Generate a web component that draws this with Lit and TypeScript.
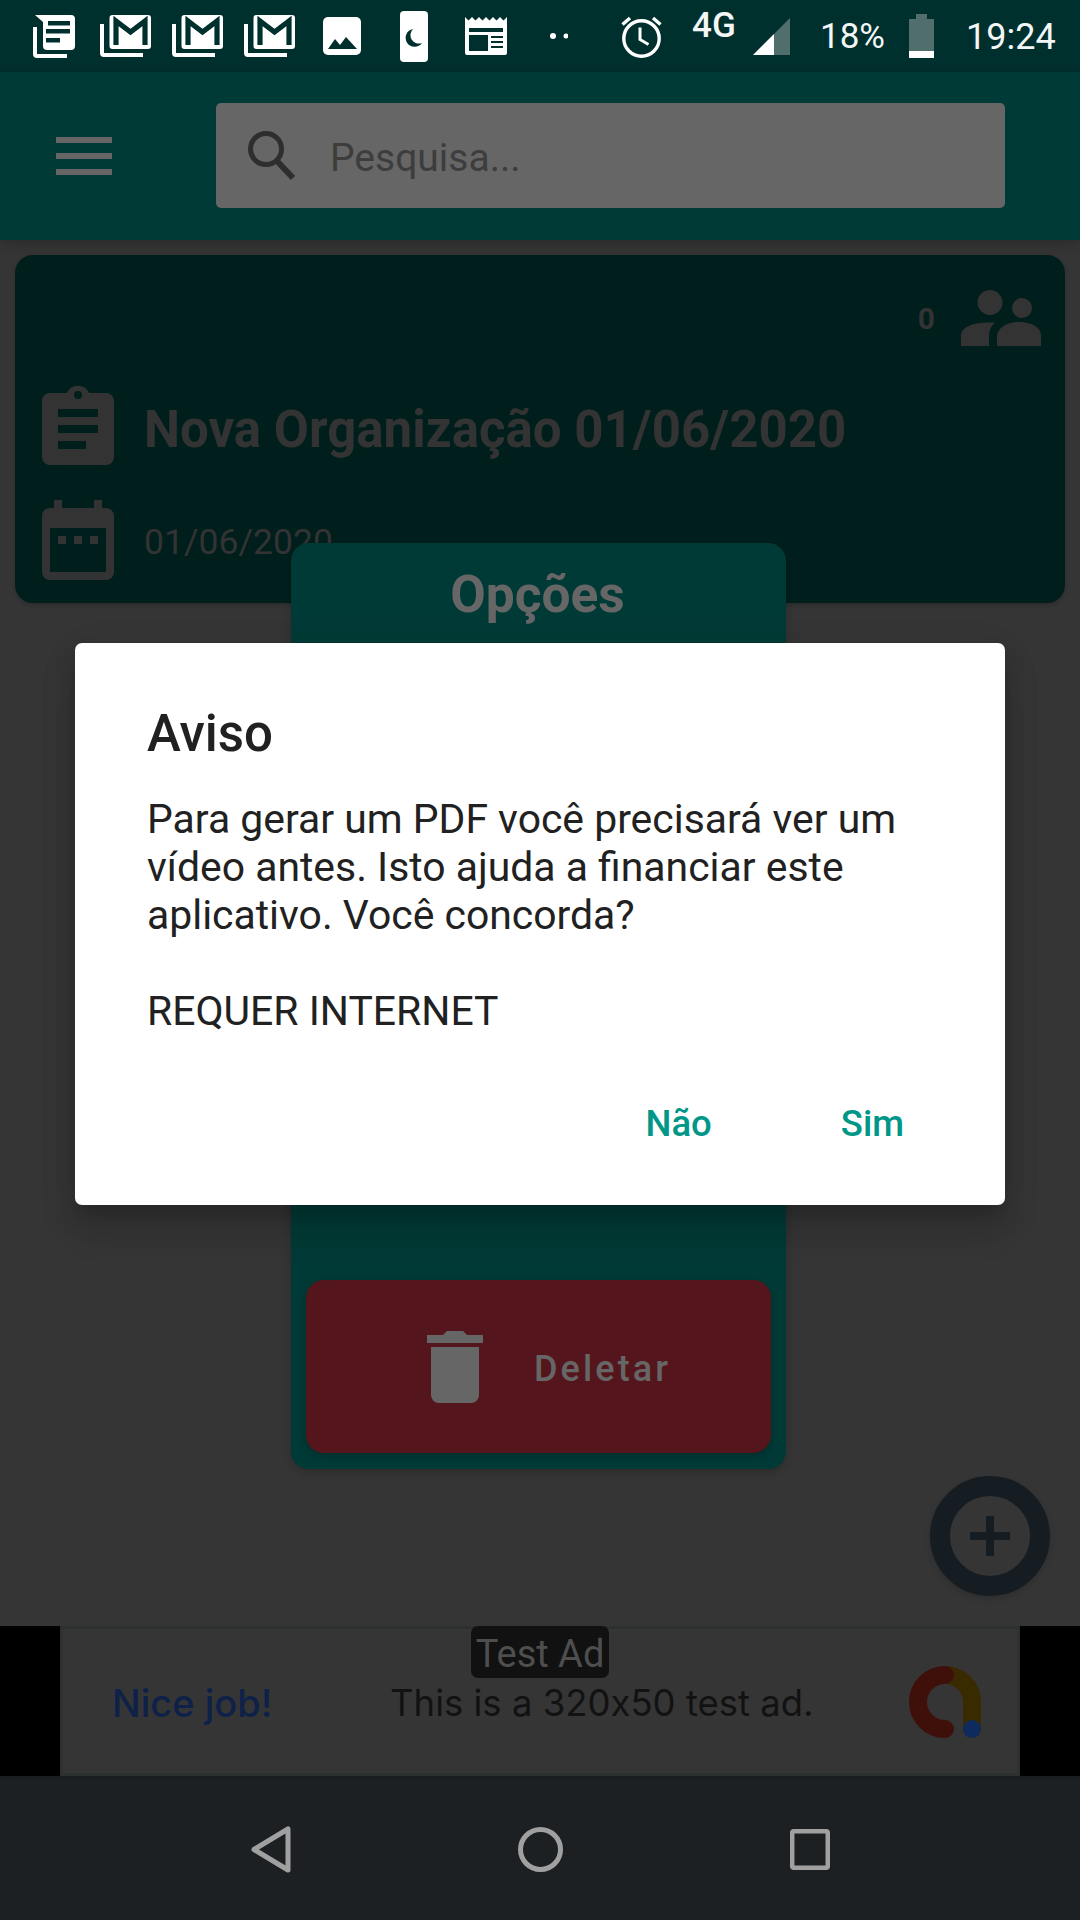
import { LitElement, html, css, svg } from "lit";
import { customElement } from "lit/decorators.js";

const mailIcon = html`<svg width="51" height="42" viewBox="0 0 51 42">
  <path d="M2 9v29a2 2 0 0 0 2 2h39" fill="none" stroke="#fff" stroke-width="4" />
  <rect x="9.5" y="0" width="41.5" height="34" rx="3" fill="#fff" />
  <path d="M16 30V6L30.5 17 45 6V30" fill="none" stroke="#00302e" stroke-width="5.2" />
</svg>`;

const hamburger = html`<svg width="56" height="38" viewBox="0 0 56 38">
  <path d="M0 0h56v6H0zM0 16h56v6H0zM0 32h56v6H0z" fill="#666" />
</svg>`;

const peopleIcon = svg`<circle cx="29" cy="12.5" r="12.5" /><circle cx="61" cy="18" r="10" />
  <path d="M0 56V46c0-9 12-13.500 28-13.500 2 0 4 .1 6 .3C29 37 28 42 28 47v9zM36 56v-8c0-11 11-16 22-16 12 0 22 5 22 13.500V56z" />`;

@customElement("app-root")
export class AppRoot extends LitElement {
  static styles = css`
    :host {
      display: block;
      position: relative;
      width: 1080px;
      height: 1920px;
      overflow: hidden;
      font-family: Roboto, "Liberation Sans", sans-serif;
      background: #353535;
    }
    svg {
      display: block;
      flex: none;
    }
    .page {
      display: flex;
      flex-direction: column;
      height: 1920px;
    }

    /* status bar */
    .status {
      height: 72px;
      flex: none;
      background: #00302e;
      display: flex;
      align-items: center;
      padding-left: 33px;
      color: #f4f7f7;
    }
    .status span {
      flex: none;
      font-size: 36px;
      line-height: 72px;
      position: relative;
      top: 1px;
    }
    .m25 { margin-left: 25px; }
    .m21 { margin-left: 21px; }
    .m28 { margin-left: 28px; }
    .m39 { margin-left: 39px; }
    .m37 { margin-left: 37px; }
    .m43 { margin-left: 43px; }
    .m53 { margin-left: 53px; }
    .m30 { margin-left: 30px; }
    .m16 { margin-left: 16px; }
    .m24 { margin-left: 24px; }
    .m32 { margin-left: 32px; }
    .status .net {
      font-size: 35px;
      font-weight: 500;
      width: 45px;
      top: -10px;
    }
    .status .pct {
      font-size: 35px;
    }

    /* app bar */
    .appbar {
      height: 168px;
      flex: none;
      background: #003a36;
      display: flex;
      align-items: center;
      padding-left: 56px;
      position: relative;
      box-shadow: 0 3px 12px rgba(0, 0, 0, 0.22);
    }
    .search {
      margin-left: 104px;
      width: 789px;
      height: 105px;
      margin-top: -1px;
      background: #666;
      border-radius: 5px;
      display: flex;
      align-items: center;
      padding-left: 32px;
      box-sizing: border-box;
      font-size: 39px;
      color: #3d3d3d;
    }
    .search svg {
      margin-right: 34px;
    }
    .search span {
      position: relative;
      top: 2px;
    }

    /* main area */
    .main {
      height: 1386px;
      flex: none;
      box-sizing: border-box;
      position: relative;
      padding: 15px;
    }
    .card {
      height: 348px;
      box-sizing: border-box;
      background: #001f1c;
      border-radius: 18px;
      padding: 35px 24px 0 27px;
      color: #333;
      box-shadow: 0 2px 5px rgba(0, 0, 0, 0.18);
    }
    .count {
      display: flex;
      justify-content: flex-end;
      align-items: center;
      gap: 26px;
      height: 56px;
      font-size: 30px;
      font-weight: 700;
    }
    .row {
      display: flex;
      align-items: center;
      gap: 30px;
    }
    .row.title {
      margin-top: 39px;
      font-size: 51px;
      font-weight: 700;
    }
    .row.date {
      margin-top: 35px;
      font-size: 35.5px;
    }
    .row.title span { position: relative; top: 4px; }
    .row.date span { position: relative; top: 2px; }

    .panel {
      position: absolute;
      left: 291px;
      top: 303px;
      width: 495px;
      height: 926px;
      box-sizing: border-box;
      padding: 0 15px 16px;
      background: #003a36;
      border-radius: 18px;
      display: flex;
      flex-direction: column;
      box-shadow: 0 3px 8px rgba(0, 0, 0, 0.2);
    }
    .panel h2 {
      margin: 0;
      padding-right: 2px;
      text-align: center;
      font-size: 51.5px;
      font-weight: 700;
      color: #666;
      line-height: 104px;
    }
    .delete {
      margin-top: auto;
      height: 173px;
      background: #54161c;
      border-radius: 18px;
      display: flex;
      align-items: center;
      padding-left: 121px;
      gap: 51px;
      color: #666;
      font-size: 36px;
      font-weight: 500;
      letter-spacing: 3.1px;
      box-shadow: 0 3px 8px rgba(0, 0, 0, 0.2);
    }
    .delete span { position: relative; top: 2px; }

    .fab {
      position: absolute;
      right: 30px;
      bottom: 30px;
      width: 120px;
      height: 120px;
      box-shadow: 0 3px 6px rgba(0, 0, 0, 0.14);
      border-radius: 50%;
    }

    /* test ad */
    .ad {
      height: 150px;
      flex: none;
      background: #000;
      padding: 0 60px;
      position: relative;
    }
    .ad-body {
      height: 150px;
      box-sizing: border-box;
      background: #353535;
      border: 3px solid #2d3030;
      display: flex;
      align-items: center;
      padding: 0 27px 0 49px;
      font-family: Inter, Roboto, sans-serif;
      font-feature-settings: "calt" 0;
      font-size: 36.5px;
      color: #121212;
    }
    .ad-body span {
      position: relative;
      top: 2px;
    }
    .ad-nice {
      color: #0e2149;
      font-size: 38px;
      font-weight: 500;
      width: 278px;
      flex: none;
    }
    .ad-text { flex: 1; }
    .ad-label {
      position: absolute;
      left: 471px;
      top: 0;
      width: 138px;
      height: 52px;
      line-height: 56px;
      background: #111;
      border-radius: 7px;
      color: #4e4e4e;
      text-align: center;
      font-size: 38px;
    }

    /* nav bar */
    .nav {
      height: 144px;
      flex: none;
      background: #1c2022;
      border-top: 3px solid #191d20;
      display: flex;
      align-items: center;
      justify-content: space-between;
      padding: 0 250px 0 251px;
      box-sizing: border-box;
    }

    /* dialog */
    .dialog {
      position: absolute;
      left: 75px;
      top: 643px;
      width: 930px;
      height: 562px;
      box-sizing: border-box;
      padding: 0 74px 0 72px;
      background: #fff;
      border-radius: 7px;
      color: #212121;
      display: flex;
      flex-direction: column;
      box-shadow: 0 24px 38px rgba(0, 0, 0, 0.12), 0 9px 46px rgba(0, 0, 0, 0.06), 0 11px 15px rgba(0, 0, 0, 0.12);
    }
    .dialog h1 {
      margin: 0;
      font-size: 51px;
      font-weight: 500;
      line-height: 60px;
      padding-top: 61px;
    }
    .dialog p {
      margin: 0;
      font-size: 40.9px;
      line-height: 48px;
    }
    .dialog .msg { margin-top: 31px; }
    .dialog .req { margin-top: 48px; }
    .actions {
      margin-top: auto;
      display: flex;
      justify-content: flex-end;
      gap: 129px;
      padding-bottom: 60px;
      padding-right: 27px;
      color: #009688;
      font-size: 36.5px;
      font-weight: 500;
    }
  `;

  render() {
    return html`
      <div class="page">
        <div class="status">
          <svg width="42" height="44" viewBox="0 0 42 44">
            <path d="M2 13v27a2 2 0 0 0 2 2h30" fill="none" stroke="#fff" stroke-width="4" />
            <path d="M2 1h36a4 4 0 0 1 4 4v27a4 4 0 0 1-4 4H14a4 4 0 0 1-4-4V8z" fill="#fff" />
            <path d="M15 7h22v4.500H15zM13 15h24v4.500H13zM13 24h14v4.500H13z" fill="#00302e" />
          </svg>
          <span class="m25"></span>${mailIcon}
          <span class="m21"></span>${mailIcon}
          <span class="m21"></span>${mailIcon}
          <svg class="m28" width="38" height="38" viewBox="0 0 38 38">
            <rect width="38" height="38" rx="5" fill="#fff" />
            <path d="M5 32l7-10 5 6 6-8 11 12z" fill="#00302e" />
          </svg>
          <svg class="m39" width="28" height="51" viewBox="0 0 28 51">
            <rect width="28" height="51" rx="4" fill="#fff" />
            <path d="M13 18A9 9 0 1 0 22 32A8.500 8.500 0 0 1 13 18z" fill="#00302e" />
          </svg>
          <svg class="m37" width="42" height="38" viewBox="0 0 42 38">
            <path d="M0 0l3.500 3.500L7 0l3.500 3.500L14 0l3.500 3.500L21 0l3.500 3.500L28 0l3.500 3.500L35 0l3.500 3.500L42 0v36a2 2 0 0 1-2 2H2a2 2 0 0 1-2-2z" fill="#fff" />
            <path d="M4 11h34v4H4zM4 18h19v16H4zM26 19h12v2H26zM26 24h12v2H26zM26 29h12v2H26z" fill="#00302e" />
          </svg>
          <svg class="m43" width="18" height="6" viewBox="0 0 18 6">
            <circle cx="3" cy="3" r="3" fill="#fff" /><circle cx="16" cy="3" r="2.500" fill="#fff" />
          </svg>
          <svg class="m53" width="41" height="43" viewBox="0 0 41 43">
            <circle cx="20.500" cy="23.500" r="17.700" fill="none" stroke="#fff" stroke-width="3.400" />
            <path d="M1.500 9.500L9 3M39.500 9.500L32 3" stroke="#fff" stroke-width="3.400" fill="none" />
            <path d="M19 12.500v12l8.500 5" stroke="#fff" stroke-width="3" fill="none" />
          </svg>
          <span class="net m30">4G</span>
          <svg class="m16" width="37" height="37" viewBox="0 0 37 37">
            <path d="M0 37L37 0v37z" fill="#4f6e6c" />
            <path d="M0 37L21 16v21z" fill="#fff" />
          </svg>
          <span class="pct m30">18%</span>
          <svg class="m24" width="25" height="44" viewBox="0 0 25 44">
            <path d="M7 0h11v5h7v32H0V5h7z" fill="#4f6e6c" />
            <path d="M0 37h25v7H0z" fill="#fff" />
          </svg>
          <span class="m32">19:24</span>
        </div>

        <div class="appbar">
          ${hamburger}
          <div class="search">
            <svg width="48" height="50" viewBox="0 0 48 50">
              <circle cx="18" cy="18" r="15.500" fill="none" stroke="#2e2e2e" stroke-width="5" />
              <path d="M29 30l16 17" stroke="#2e2e2e" stroke-width="6" fill="none" />
            </svg>
            <span>Pesquisa...</span>
          </div>
        </div>

        <div class="main">
          <div class="card">
            <div class="count">
              0
              <svg width="80" height="56" viewBox="0 0 80 56" fill="#333">${peopleIcon}</svg>
            </div>
            <div class="row title">
              <svg width="72" height="80" viewBox="0 0 72 80" fill="#333">
                <path fill-rule="evenodd" d="M8 8h17a12 12 0 0 1 22 0h17a8 8 0 0 1 8 8v56a8 8 0 0 1-8 8H8a8 8 0 0 1-8-8V16a8 8 0 0 1 8-8zM36 6a4 4 0 1 0 0 8 4 4 0 0 0 0-8zM16 24v8h40v-8zM16 40v8h40v-8zM16 56v8h28v-8z" />
              </svg>
              <span>Nova Organização 01/06/2020</span>
            </div>
            <div class="row date">
              <svg width="72" height="80" viewBox="0 0 72 80" fill="#333">
                <path fill-rule="evenodd" d="M12 0h8v8h32V0h8v8h4a8 8 0 0 1 8 8v56a8 8 0 0 1-8 8H8a8 8 0 0 1-8-8V16a8 8 0 0 1 8-8h4zM8 28v44h56V28zM16 36h8v8h-8zM32 36h8v8h-8zM48 36h8v8h-8z" />
              </svg>
              <span>01/06/2020</span>
            </div>
          </div>

          <div class="panel">
            <h2>Opções</h2>
            <div class="delete">
              <svg width="56" height="72" viewBox="0 0 56 72" fill="#666">
                <path d="M0 4h16l4-4h16l4 4h16v8H0zM4 16h48v48a8 8 0 0 1-8 8H12a8 8 0 0 1-8-8z" />
              </svg>
              <span>Deletar</span>
            </div>
          </div>

          <div class="fab">
            <svg width="120" height="120" viewBox="0 0 120 120">
              <circle cx="60" cy="60" r="50" fill="none" stroke="#161d22" stroke-width="20" />
              <path d="M40 60h40M60 40v40" stroke="#161d22" stroke-width="8" />
            </svg>
          </div>
        </div>

        <div class="ad">
          <div class="ad-body">
            <span class="ad-nice">Nice job!</span>
            <span class="ad-text">This is a 320x50 test ad.</span>
            <svg width="90" height="100" viewBox="0 0 90 100" fill="none" stroke-width="18" stroke-linecap="round">
              <path d="M72 78V51a27 27 0 0 0-27-27" stroke="#3a2a00" />
              <path d="M45 24a27 27 0 0 0 0 54" stroke="#3f0f0a" />
              <circle cx="72" cy="78" r="9" fill="#0f2b5e" stroke="none" />
            </svg>
          </div>
          <div class="ad-label">Test Ad</div>
        </div>

        <div class="nav">
          <svg width="40" height="47" viewBox="0 0 40 47" fill="none" stroke="#a0a0a0" stroke-width="5" stroke-linejoin="round">
            <path d="M37 3v41L3 23.500z" />
          </svg>
          <svg width="45" height="45" viewBox="0 0 45 45" fill="none" stroke="#a0a0a0" stroke-width="5">
            <circle cx="22.500" cy="22.500" r="20" />
          </svg>
          <svg width="40" height="41" viewBox="0 0 40 41" fill="none" stroke="#a0a0a0" stroke-width="4.500" stroke-linejoin="round">
            <rect x="2.200" y="2.200" width="35.600" height="36.600" rx="1.500" />
          </svg>
        </div>
      </div>

      <div class="dialog">
        <h1>Aviso</h1>
        <p class="msg">Para gerar um PDF você precisará ver um vídeo antes. Isto ajuda a financiar este aplicativo. Você concorda?</p>
        <p class="req">REQUER INTERNET</p>
        <div class="actions"><span>Não</span><span>Sim</span></div>
      </div>
    `;
  }
}
